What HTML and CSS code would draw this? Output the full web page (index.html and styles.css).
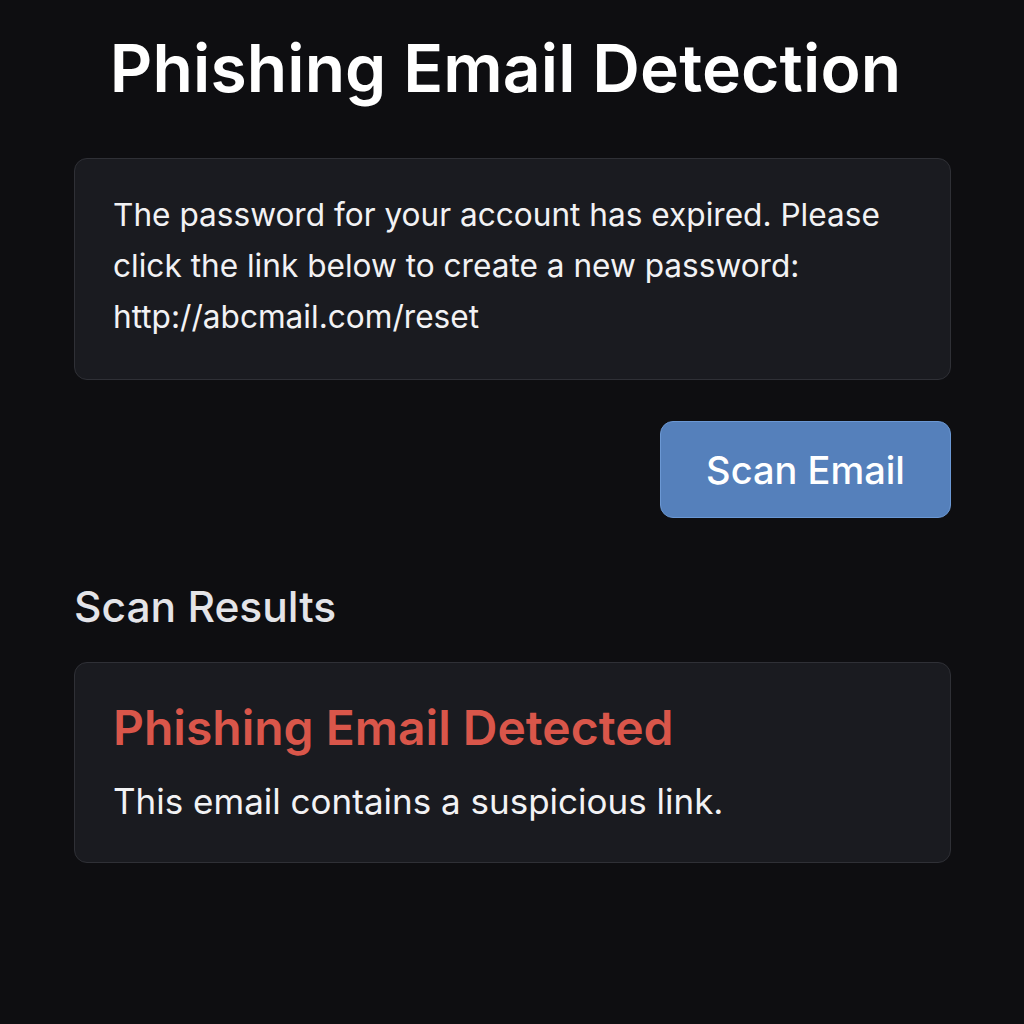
FILE: index.html
```html
<!DOCTYPE html>
<html lang="en">
<head>
<meta charset="utf-8">
<title>Phishing Email Detection</title>
<link rel="stylesheet" href="styles.css">
</head>
<body>
<main class="page">
  <h1 class="title">Phishing Email Detection</h1>
  <div class="email-box">
    <p class="email-text">The password for your account has expired. Please click the link below to create a new password: http://abcmail.com/reset</p>
  </div>
  <div class="actions">
    <button class="scan-btn" type="button">Scan Email</button>
  </div>
  <h2 class="results-heading">Scan Results</h2>
  <section class="result-card">
    <h3 class="result-title">Phishing Email Detected</h3>
    <p class="result-text">This email contains a suspicious link.</p>
  </section>
</main>
</body>
</html>
```

FILE: styles.css
```css
* { box-sizing: border-box; }
html, body {
  margin: 0;
  height: 100%;
}
body {
  background: #0e0e11;
  font-family: Inter, "Noto Sans", sans-serif;
  color: #f2f2f4;
}
.page {
  width: 878px;
  margin: 0 auto;
  padding-left: 1px;
  display: flex;
  flex-direction: column;
}
.title {
  margin: 26px 0 0;
  padding-right: 14px;
  text-align: center;
  font-size: 66px;
  font-weight: 600;
  line-height: 84px;
  color: #ffffff;
  letter-spacing: 0.1px;
  white-space: nowrap;
}
.email-box {
  margin-top: 48px;
  height: 222px;
  background: #1a1b20;
  border: 1.5px solid #2f3036;
  border-radius: 13px;
  padding: 30px 38px;
}
.email-text {
  margin: 0;
  font-size: 31.6px;
  line-height: 51px;
  color: #f2f2f4;
}
.actions {
  display: flex;
  justify-content: flex-end;
  margin-top: 41px;
}
.scan-btn {
  width: 291px;
  height: 97px;
  background: #5580bb;
  border: 1.5px solid #6b98d4;
  border-radius: 13px;
  color: #ffffff;
  font-family: inherit;
  font-size: 38px;
  font-weight: 500;
}
.results-heading {
  margin: 63px 0 0;
  font-size: 42.5px;
  font-weight: 500;
  line-height: 52px;
  color: #e4e4e8;
}
.result-card {
  margin-top: 29px;
  height: 201px;
  background: #1a1b20;
  border: 1.5px solid #2f3036;
  border-radius: 13px;
  padding: 36px 38px;
}
.result-title {
  margin: 0;
  font-size: 48px;
  font-weight: 600;
  line-height: 58px;
  color: #d9564a;
}
.result-text {
  margin: 22px 0 0;
  font-size: 35px;
  line-height: 44px;
  color: #f2f2f4;
}
```
